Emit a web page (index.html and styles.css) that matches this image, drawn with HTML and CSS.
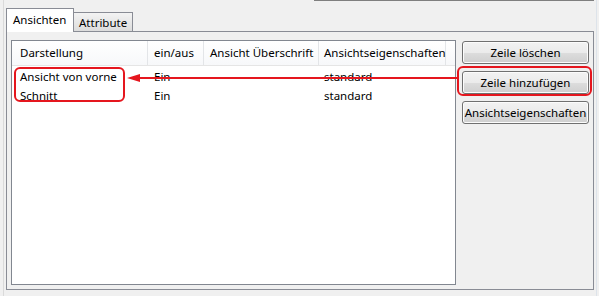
FILE: index.html
```html
<!DOCTYPE html>
<html lang="de">
<head>
    <meta charset="UTF-8">
    <title>Ansichten</title>
    <link rel="stylesheet" href="styles.css">
</head>
<body>
    <div class="frame">
        <div class="topline"></div>

        <div class="tabs">
            <div class="tab tab-active">Ansichten</div>
            <div class="tab">Attribute</div>
        </div>

        <div class="panel">
            <div class="list">
                <div class="list-head">
                    <div class="cell">Darstellung</div>
                    <div class="cell">ein/aus</div>
                    <div class="cell">Ansicht Überschrift</div>
                    <div class="cell">Ansichtseigenschaften</div>
                    <div class="cell cell-rest"></div>
                </div>
                <div class="list-body">
                    <div class="list-row">
                        <div class="cell">Ansicht von vorne</div>
                        <div class="cell">Ein</div>
                        <div class="cell"></div>
                        <div class="cell">standard</div>
                    </div>
                    <div class="list-row">
                        <div class="cell">Schnitt</div>
                        <div class="cell">Ein</div>
                        <div class="cell"></div>
                        <div class="cell">standard</div>
                    </div>
                </div>
            </div>

            <div class="buttons">
                <button type="button">Zeile löschen</button>
                <button type="button">Zeile hinzufügen</button>
                <button type="button">Ansichtseigenschaften</button>
            </div>
        </div>
    </div>

    <!-- rote Markierungen ueber dem Dialog -->
    <svg class="marks" width="599" height="296" viewBox="0 0 599 296">
        <rect x="15" y="68" width="109" height="33" rx="5" fill="none" stroke="#e5161e" stroke-width="2"/>
        <rect x="458" y="67" width="133" height="28" rx="5" fill="none" stroke="#e5161e" stroke-width="2"/>
        <line x1="138" y1="78" x2="458" y2="78" stroke="#e5161e" stroke-width="2"/>
        <polygon points="127,78 140,74 140,82" fill="#e5161e"/>
    </svg>
</body>
</html>
```

FILE: styles.css
```css
body {
    margin: 0;
    width: 599px;
    height: 296px;
    overflow: hidden;
    background-color: #f0f0f0;
    font-family: "Noto Sans", "Liberation Sans", sans-serif;
    font-size: 11.5px;
    color: #000;
    position: relative;
}
.frame {
    margin-left: 3px;
    width: 594px;
    height: 296px;
    box-sizing: border-box;
    border-left: 1px solid #dadada;
    border-right: 1px solid #dde3ea;
    padding-left: 2px;
}
.topline {
    height: 1px;
    margin-left: 308px;
    width: 280px;
    background-color: #7f7f7f;
}
.tabs {
    display: flex;
    align-items: flex-end;
    height: 23px;
    margin-top: 7px;
}
.tab {
    height: 19px;
    line-height: 19px;
    padding: 0 5px;
    border: 1px solid #898c95;
    border-bottom: none;
    background: linear-gradient(#f3f3f3, #dcdcdc);
    box-sizing: border-box;
    width: 60px;
    margin-left: -1px;
}
.tab-active {
    height: 24px;
    line-height: 22px;
    width: 68px;
    padding: 0 6px;
    margin-left: 0;
    margin-bottom: -1px;
    background: #fff;
    position: relative;
    z-index: 1;
}
.panel {
    display: flex;
    gap: 6px;
    width: 588px;
    height: 259px;
    box-sizing: border-box;
    border: 1px solid #898c95;
    padding: 8px 4px 4px 4px;
    background-color: #f0f0f0;
}
.list {
    width: 445px;
    box-sizing: border-box;
    border: 1px solid #828790;
    background-color: #fff;
}
.list-head, .list-row {
    display: grid;
    grid-template-columns: 136px 56px 115px 127px 1fr;
}
.list-head {
    height: 24px;
    border-bottom: 1px solid #e5e5e5;
    background: linear-gradient(#fff, #f7f8fa);
}
.list-head .cell {
    line-height: 23px;
    border-right: 1px solid #e3e5e8;
}
.list-head .cell-rest {
    border-right: none;
}
.cell {
    padding-left: 6px;
    white-space: nowrap;
}
.cell:first-child {
    padding-left: 8px;
}
.cell:nth-child(4) {
    padding-left: 5px;
}
.list-body {
    padding-top: 1px;
}
.list-row {
    height: 19px;
    line-height: 19px;
}
.buttons {
    display: flex;
    flex-direction: column;
    gap: 7px;
    margin-top: 1px;
    width: 127px;
}
button {
    height: 23px;
    padding: 0;
    font-family: inherit;
    font-size: 11.5px;
    color: #000;
    border: 1px solid #707070;
    border-radius: 3px;
    background: linear-gradient(#f2f2f2 0%, #ebebeb 50%, #dddddd 51%, #cfcfcf 100%);
    box-shadow: inset 0 0 0 1px #fcfcfc;
}
.marks {
    position: absolute;
    left: 0;
    top: 0;
    pointer-events: none;
}
```
